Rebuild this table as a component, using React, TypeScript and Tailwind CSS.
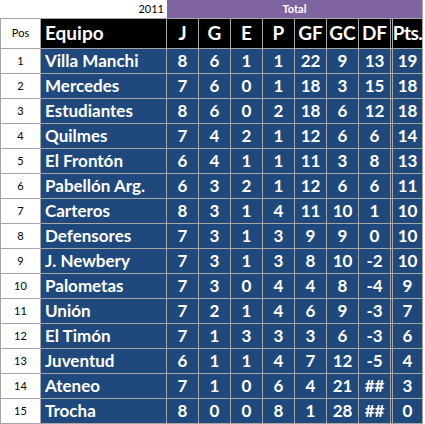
import React from 'react';

type Row = [number, string, ...(number | string)[]];

const rows: Row[] = [
  [1, 'Villa Manchi', 8, 6, 1, 1, 22, 9, 13, 19],
  [2, 'Mercedes', 7, 6, 0, 1, 18, 3, 15, 18],
  [3, 'Estudiantes', 8, 6, 0, 2, 18, 6, 12, 18],
  [4, 'Quilmes', 7, 4, 2, 1, 12, 6, 6, 14],
  [5, 'El Frontón', 6, 4, 1, 1, 11, 3, 8, 13],
  [6, 'Pabellón Arg.', 6, 3, 2, 1, 12, 6, 6, 11],
  [7, 'Carteros', 8, 3, 1, 4, 11, 10, 1, 10],
  [8, 'Defensores', 7, 3, 1, 3, 9, 9, 0, 10],
  [9, 'J. Newbery', 7, 3, 1, 3, 8, 10, -2, 10],
  [10, 'Palometas', 7, 3, 0, 4, 4, 8, -4, 9],
  [11, 'Unión', 7, 2, 1, 4, 6, 9, -3, 7],
  [12, 'El Timón', 7, 1, 3, 3, 3, 6, -3, 6],
  [13, 'Juventud', 6, 1, 1, 4, 7, 12, -5, 4],
  [14, 'Ateneo', 7, 1, 0, 6, 4, 21, '##', 3],
  [15, 'Trocha', 8, 0, 0, 8, 1, 28, '##', 0],
];

const statCols = ['J', 'G', 'E', 'P', 'GF', 'GC'];

const App: React.FC = () => {
  return (
    <div className="w-[425px] h-[424px] bg-white font-['Lato','Open_Sans',sans-serif] text-white">
      {/* year + Total band */}
      <div className="flex h-[19px]">
        <div className="w-[167px] border-b border-[#a6a6a6] text-right pr-[3px] text-[11px] leading-[18px] text-black">
          2011
        </div>
        <div className="w-[256px] bg-[#8064a2] border-b border-r border-[#a6a6a6] text-center text-[11px] font-bold leading-[18px]">
          Total
        </div>
      </div>

      {/* column headers */}
      <div className="flex h-[30px] font-bold">
        <div className="w-[41px] border-l border-r border-b border-[#a6a6a6] text-black flex items-center justify-center text-[11px] font-normal">
          Pos
        </div>
        <div className="w-[126px] bg-black border-r border-b border-[#a6a6a6] flex items-center pl-[4px] text-[19px]">
          Equipo
        </div>
        {statCols.map((c) => (
          <div
            key={c}
            className="w-[32px] bg-black border-r border-b border-[#a6a6a6] flex items-center justify-center text-[19px]"
          >
            {c}
          </div>
        ))}
        <div className="w-[31px] bg-black border-b border-[#a6a6a6] flex items-center justify-center text-[19px]">
          DF
        </div>
        <div className="w-[33px] bg-black border-l-[3px] border-double border-r border-b border-[#a6a6a6] flex items-center justify-center text-[19px] tracking-[-0.5px]">
          Pts.
        </div>
      </div>

      {/* standings */}
      {rows.map(([pos, team, ...stats]) => {
        const nums = stats.slice(0, 6);
        const df = stats[6];
        const pts = stats[7];
        return (
          <div key={pos} className="flex h-[25px] font-bold text-[17px]">
            <div className="w-[41px] border-l border-r border-b border-[#a6a6a6] text-black flex items-center justify-center text-[11px] font-normal">
              {pos}
            </div>
            <div className="w-[126px] bg-[#1f497d] border-r border-b border-[#a6a6a6] flex items-center pl-[4px] whitespace-nowrap">
              {team}
            </div>
            {nums.map((n, i) => (
              <div
                key={i}
                className="w-[32px] bg-[#1f497d] border-r border-b border-[#a6a6a6] flex items-center justify-center"
              >
                {n}
              </div>
            ))}
            <div className="w-[31px] bg-[#1f497d] border-b border-[#a6a6a6] flex items-center justify-center">
              {df}
            </div>
            <div className="w-[33px] bg-[#1f497d] border-l-[3px] border-double border-r border-b border-[#a6a6a6] flex items-center justify-center">
              {pts}
            </div>
          </div>
        );
      })}
    </div>
  );
};

export default App;
